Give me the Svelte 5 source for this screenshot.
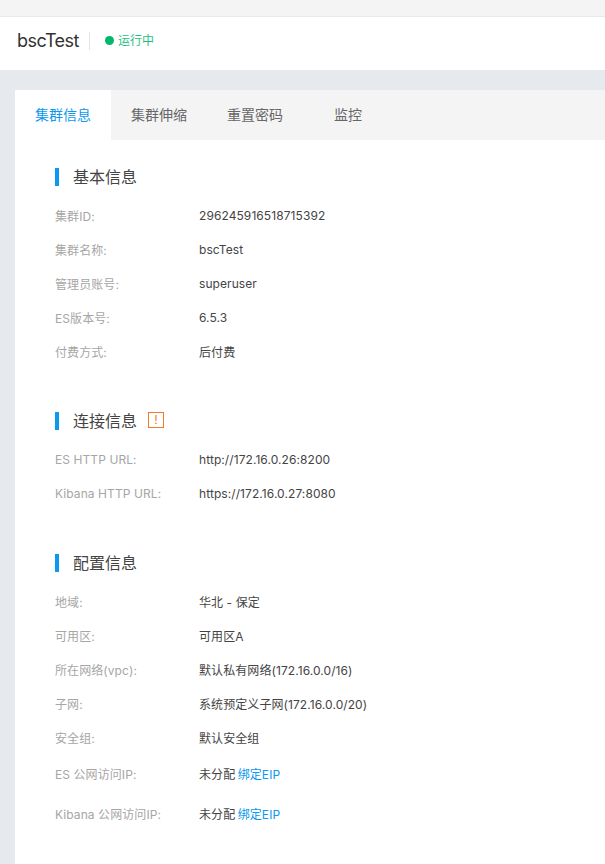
<script>
    const basic = [
        { label: "集群ID:", value: "296245916518715392" },
        { label: "集群名称:", value: "bscTest" },
        { label: "管理员账号:", value: "superuser" },
        { label: "ES版本号:", value: "6.5.3" },
        { label: "付费方式:", value: "后付费" },
    ];
    const connect = [
        { label: "ES HTTP URL:", value: "http://172.16.0.26:8200" },
        { label: "Kibana HTTP URL:", value: "https://172.16.0.27:8080" },
    ];
    const config = [
        { label: "地域:", value: "华北 - 保定" },
        { label: "可用区:", value: "可用区A" },
        { label: "所在网络(vpc):", value: "默认私有网络(172.16.0.0/16)" },
        { label: "子网:", value: "系统预定义子网(172.16.0.0/20)" },
        { label: "安全组:", value: "默认安全组" },
    ];
    const tabs = ["集群信息", "集群伸缩", "重置密码", "监控"];
</script>

{#snippet row(item)}
    <div class="row">
        <span class="label">{item.label}</span>
        <span class="value">{item.value}</span>
    </div>
{/snippet}

<div class="top-strip"></div>
<header class="head">
    <h1>bscTest</h1>
    <span class="divider"></span>
    <span class="dot"></span>
    <span class="status">运行中</span>
</header>

<main class="page">
    <div class="panel">
        <nav class="tabs">
            {#each tabs as tab, i}
                <div class={i === 0 ? "tab active" : "tab"}>{tab}</div>
            {/each}
        </nav>

        <section class="group first">
            <h2>基本信息</h2>
            {#each basic as item}
                {@render row(item)}
            {/each}
        </section>

        <section class="group">
            <h2>连接信息 <span class="warn">!</span></h2>
            {#each connect as item}
                {@render row(item)}
            {/each}
        </section>

        <section class="group">
            <h2>配置信息</h2>
            {#each config as item}
                {@render row(item)}
            {/each}
            <div class="eips">
                <div class="row">
                    <span class="label">ES 公网访问IP:</span>
                    <span class="value">未分配 <a href="#eip">绑定EIP</a></span>
                </div>
                <div class="row">
                    <span class="label">Kibana 公网访问IP:</span>
                    <span class="value">未分配 <a href="#eip">绑定EIP</a></span>
                </div>
            </div>
        </section>
    </div>
</main>

<style>
    :global(body) {
        background: #e6e9ee;
        font-family: Inter, "Noto Sans CJK SC", sans-serif;
        overflow: hidden;
    }

    .top-strip {
        height: 16px;
        background: #f4f4f5;
        border-bottom: 1px solid #e6e9ee;
    }

    .head {
        box-sizing: border-box;
        height: 53px;
        background: #fff;
        display: flex;
        align-items: center;
        padding: 0 0 6px 17px;
    }

    h1 {
        margin: 0;
        font-size: 18px;
        font-weight: 400;
        color: #333;
        letter-spacing: -0.5px;
    }

    .divider {
        width: 1px;
        height: 18px;
        background: #e2e4e8;
        margin: 0 15px 0 10px;
    }

    .dot {
        width: 9px;
        height: 9px;
        border-radius: 50%;
        background: #00b86b;
        margin: -1px 4px 0 0;
    }

    .status {
        font-size: 12px;
        color: #1fc07f;
        margin-top: -2px;
    }

    .page {
        padding: 20px 0 0 15px;
    }

    .panel {
        background: #fff;
        height: 800px;
    }

    .tabs {
        display: flex;
        height: 50px;
        background: #f4f4f5;
    }

    .tab {
        box-sizing: border-box;
        min-width: 90px;
        padding: 0 20px;
        line-height: 50px;
        text-align: center;
        font-size: 14px;
        color: #666;
    }

    .tab.active {
        background: #fff;
        color: #0a98f0;
    }

    .group {
        padding: 44px 0 0 40px;
    }

    .group.first {
        padding-top: 28px;
    }

    h2 {
        box-sizing: border-box;
        display: flex;
        align-items: center;
        margin: 0 0 12px;
        height: 18px;
        padding: 0 0 2px 14px;
        border-left: 4px solid #0a98f0;
        font-size: 16px;
        font-weight: 400;
        color: #444;
    }

    .warn {
        box-sizing: border-box;
        width: 16px;
        height: 16px;
        line-height: 14px;
        margin-left: 11px;
        border: 1px solid #f57a2c;
        color: #f57a2c;
        font-size: 12px;
        text-align: center;
    }

    .row {
        display: flex;
        height: 34px;
        align-items: center;
        font-size: 12px;
        letter-spacing: 0.08px;
    }

    .eips {
        margin-top: -1px;
    }

    .eips .row {
        height: 40px;
    }

    .eips .value {
        word-spacing: -1px;
    }

    .label {
        width: 144px;
        color: #a6a6a6;
    }

    .value {
        color: #444;
    }

    a {
        color: #0a98f0;
        text-decoration: none;
    }
</style>
